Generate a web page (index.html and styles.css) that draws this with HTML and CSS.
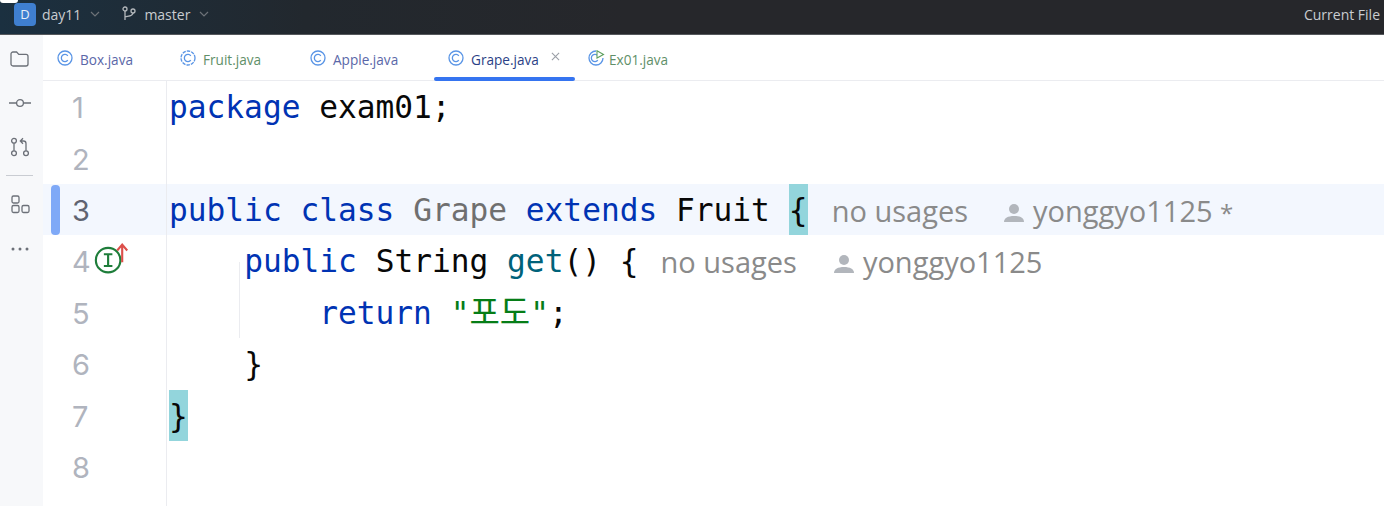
FILE: index.html
```html
<!DOCTYPE html>
<html lang="en">
<head>
<meta charset="utf-8">
<title>Grape.java</title>
<link rel="stylesheet" href="styles.css">
</head>
<body>
<div class="app">
  <header class="topbar">
    <span class="corner"></span>
    <div class="project">
      <span class="avatar">D</span>
      <span class="top-label">day11</span>
      <svg class="chev" viewBox="0 0 10 6"><path d="M1 1l4 4 4-4"/></svg>
    </div>
    <div class="branch">
      <svg class="branch-icon" viewBox="0 0 14 16"><circle cx="3" cy="3" r="2"/><circle cx="11" cy="5" r="2"/><path d="M3 5v9M11 7c0 3-4 3-8 4"/></svg>
      <span class="top-label">master</span>
      <svg class="chev" viewBox="0 0 10 6"><path d="M1 1l4 4 4-4"/></svg>
    </div>
    <span class="current">Current File</span>
  </header>
  <div class="main">
    <nav class="sidebar">
      <svg class="side-icon folder" viewBox="0 0 20 20"><path d="M1.500 5a2 2 0 0 1 2-2h3.600l2.200 2.400h7.200a2 2 0 0 1 2 2v7.600a2 2 0 0 1-2 2h-13a2 2 0 0 1-2-2z"/></svg>
      <svg class="side-icon commit" viewBox="0 0 22 12"><circle cx="11" cy="6" r="3.400"/><path d="M0 6h7.600M14.400 6H22"/></svg>
      <svg class="side-icon pull" viewBox="0 0 20 20"><circle cx="4" cy="3.800" r="2.400"/><circle cx="4" cy="16.200" r="2.400"/><circle cx="16" cy="16.200" r="2.400"/><path d="M4 6.200v7.600M16 13.800V6.500a2.500 2.500 0 0 0-2.500-2.500H10.500M13 1.200L10.300 4l2.700 2.800"/></svg>
      <span class="side-sep"></span>
      <svg class="side-icon struct" viewBox="0 0 20 20"><rect x="2" y="2" width="7" height="7" rx="1.500"/><rect x="2" y="11.500" width="7" height="7" rx="1.500"/><rect x="12" y="11.500" width="7" height="7" rx="1.500"/></svg>
      <svg class="side-icon more" viewBox="0 0 20 4"><circle cx="3" cy="2" r="1.500"/><circle cx="10" cy="2" r="1.500"/><circle cx="17" cy="2" r="1.500"/></svg>
    </nav>
    <div class="content">
      <div class="tabs">
        <div class="tab tab-box"><svg class="cicon" viewBox="0 0 16 16"><circle cx="8" cy="8" r="7"/><path d="M10.800 5.800a3.600 3.600 0 1 0 0 4.400"/></svg><span class="name-blue">Box.java</span></div>
        <div class="tab tab-fruit"><svg class="cicon" viewBox="0 0 16 16"><circle cx="8" cy="8" r="7" stroke-dasharray="3.500 1"/><path d="M10.800 5.800a3.600 3.600 0 1 0 0 4.400"/></svg><span class="name-green">Fruit.java</span></div>
        <div class="tab tab-apple"><svg class="cicon" viewBox="0 0 16 16"><circle cx="8" cy="8" r="7"/><path d="M10.800 5.800a3.600 3.600 0 1 0 0 4.400"/></svg><span class="name-blue">Apple.java</span></div>
        <div class="tab tab-grape"><svg class="cicon" viewBox="0 0 16 16"><circle cx="8" cy="8" r="7"/><path d="M10.800 5.800a3.600 3.600 0 1 0 0 4.400"/></svg><span class="name-active">Grape.java</span><svg class="close" viewBox="0 0 10 10"><path d="M1 1l8 8M9 1l-8 8"/></svg></div>
        <div class="tab tab-ex"><svg class="cicon" viewBox="0 0 18 16"><path d="M9 1a7 7 0 1 0 7 7"/><path d="M10.800 5.800a3.600 3.600 0 1 0 0 4.400"/><path class="run" d="M10 .8l6.500 3.700L10 8z"/></svg><span class="name-green">Ex01.java</span></div>
      </div>
      <div class="editor">
        <div class="line"><div class="gutter"><span class="num">1</span></div><div class="code"><span class="kw">package</span> exam01;</div></div>
        <div class="line"><div class="gutter"><span class="num">2</span></div><div class="code"></div></div>
        <div class="line current-line"><div class="gutter"><span class="change"></span><span class="num">3</span></div><div class="code"><span class="kw">public</span> <span class="kw">class</span> <span class="cls">Grape</span> <span class="kw">extends</span> Fruit <span class="match">{</span><span class="hint hint-a">no usages</span><span class="author author-a"><svg class="user" viewBox="0 0 22 20"><circle cx="11" cy="6" r="5"/><path d="M1 19c0-4 4-6 10-6s10 2 10 6z"/></svg>yonggyo1125 <span class="star">*</span></span></div></div>
        <div class="line"><div class="gutter"><span class="num">4</span><svg class="impl" viewBox="0 0 32 30"><circle cx="13.300" cy="17" r="11.500"/><path d="M9.300 11.500h8M9.300 22.500h8M13.300 11.500v11"/><path class="up" d="M26.500 19V3M21.800 8l4.700-5.500 4.700 5.500"/></svg></div><div class="code indent1"><span class="kw">public</span> String <span class="method">get</span>() {<span class="hint hint-b">no usages</span><span class="author author-b"><svg class="user" viewBox="0 0 22 20"><circle cx="11" cy="6" r="5"/><path d="M1 19c0-4 4-6 10-6s10 2 10 6z"/></svg>yonggyo1125</span></div></div>
        <div class="line"><div class="gutter"><span class="num">5</span></div><div class="code indent2"><span class="guide"></span><span class="kw">return</span> <span class="str">"<span class="kr" lang="ko">포도</span>"</span>;</div></div>
        <div class="line"><div class="gutter"><span class="num">6</span></div><div class="code indent1">}</div></div>
        <div class="line"><div class="gutter"><span class="num">7</span></div><div class="code"><span class="match">}</span></div></div>
        <div class="line"><div class="gutter"><span class="num">8</span></div><div class="code"></div></div>
        <div class="line filler"><div class="gutter"></div><div class="code"></div></div>
      </div>
    </div>
  </div>
</div>
</body>
</html>
```
FILE: styles.css
```css
* { box-sizing: border-box; }
html, body { margin: 0; padding: 0; height: 100%; overflow: hidden; background: #fff; }
.app { width: 1384px; height: 506px; display: flex; flex-direction: column; font-family: "Open Sans", "Noto Sans", sans-serif; }

.topbar { position: relative; flex: none; height: 35px; display: flex; align-items: center; padding: 0 0 6px 14px; background: linear-gradient(90deg, #1b3040 0%, #22282e 22%, #26272b 45%, #26272b 100%); border-bottom: 1px solid #55585c; color: #c9ccd0; font-size: 14px; }
.corner { position: absolute; left: 0; top: 0; width: 18px; height: 3px; background: #fff; border-radius: 0 0 9px 9px; }
.project { display: flex; align-items: center; }
.avatar { width: 22px; height: 23px; margin-right: 6px; border-radius: 4px; background: #3f7fd0; color: #e8eef8; font-size: 13px; display: flex; align-items: center; justify-content: center; }
.chev { width: 10px; height: 6px; margin-left: 9px; fill: none; stroke: #6d7278; stroke-width: 1.200; }
.branch { display: flex; align-items: center; margin-left: 22px; }
.branch-icon { width: 14px; height: 16px; margin-right: 8px; fill: none; stroke: #b4b8bc; stroke-width: 1.300; }
.current { margin-left: auto; margin-right: 4px; }

.main { flex: 1; display: flex; min-height: 0; }
.sidebar { flex: none; width: 43px; background: #f7f8fa; display: flex; flex-direction: column; align-items: center; padding: 14px 4px 0 0; }
.side-icon { display: block; fill: none; stroke: #6c7078; stroke-width: 1.300; }
.folder { width: 21px; height: 20px; }
.commit { width: 22px; height: 12px; margin-top: 28px; }
.pull { width: 20px; height: 20px; margin-top: 28px; }
.side-sep { width: 27px; height: 1px; background: #c9ccd2; margin-top: 18px; }
.struct { width: 20px; height: 20px; margin-top: 18px; }
.more { width: 20px; height: 4px; margin-top: 33px; fill: #6c7078; stroke: none; }

.content { flex: 1; min-width: 0; display: flex; flex-direction: column; }
.tabs { flex: none; height: 46px; display: flex; align-items: center; border-bottom: 1px solid #ebecf0; font-size: 13.600px; }
.tab { height: 100%; display: flex; align-items: center; position: relative; padding-top: 4px; }
.tab-box { width: 123px; padding-left: 14px; }
.tab-fruit { width: 130px; padding-left: 14px; }
.tab-apple { width: 138px; padding-left: 14px; }
.tab-grape { width: 141px; padding-left: 14px; }
.tab-ex { padding-left: 12px; }
.tab-grape::after { content: ""; position: absolute; left: 0; right: 0; bottom: -1px; height: 4px; border-radius: 2px; background: #3574f0; }
.cicon { width: 16px; height: 16px; margin: -3px 7px 0 0; fill: none; stroke: #5a95e6; stroke-width: 1.300; }
.tab-ex .cicon { width: 18px; margin-right: 4px; }
.run { fill: #fff; stroke: #5fa05f; stroke-width: 1.100; }
.name-blue { color: #5a67a8; }
.name-green { color: #5f8f68; }
.name-active { color: #2b3f86; }
.close { width: 9px; height: 9px; margin-left: 12px; margin-top: -7px; fill: none; stroke: #9a9ea6; stroke-width: 1.200; }

.editor { flex: 1; min-height: 0; display: flex; flex-direction: column; font-family: "DejaVu Sans Mono", "Noto Sans CJK KR", monospace; font-size: 31.200px; color: #080808; }
.line { flex: none; height: 51.430px; display: flex; align-items: stretch; }
.filler { flex: 1; height: auto; }
.current-line { background: #f3f7fe; }
.gutter { flex: none; width: 124px; border-right: 1px solid #ebecf0; display: flex; align-items: center; position: relative; padding: 2px 0 0 29px; }
.num { color: #b0b4be; font-size: 29px; font-family: "Inter", "Noto Sans", sans-serif; font-weight: 400; }
.current-line .num { color: #5f6370; }
.change { position: absolute; left: 8px; top: 1px; width: 9px; height: 50px; border-radius: 4px; background: #7fa9f7; }
.impl { width: 36px; height: 32px; margin-left: 2px; margin-top: -8px; fill: none; stroke: #1e7d3a; stroke-width: 2; }
.impl .up { stroke: #dc4f4a; }
.code { flex: 1; min-height: 0; overflow: visible; white-space: pre; padding-left: 2px; position: relative; line-height: 53.400px; }
.indent1 { padding-left: 77.200px; }
.indent2 { padding-left: 152.200px; }
.guide { position: absolute; left: 72px; top: -25px; bottom: 0; width: 1px; background: #ebecf0; }
.kw { color: #0033b3; }
.cls { color: #6f6f6f; }
.method { color: #00627a; }
.str { color: #067d17; }
.kr { font-size: 33px; line-height: 1; }
.match { display: inline-block; width: 19px; height: 51.430px; vertical-align: top; text-align: center; background: #93d5dc; }
.hint, .author { font-family: "Open Sans", "Noto Sans", sans-serif; font-size: 29px; color: #8a8a8a; vertical-align: -1px; }
.hint-a { margin-left: 24px; }
.hint-b { margin-left: 22px; }
.author-a { margin-left: 35px; }
.author-b { margin-left: 36px; }
.user { width: 22px; height: 20px; margin-right: 8px; vertical-align: -1px; fill: #b2b6bc; }
.star { font-size: 24px; }
```
